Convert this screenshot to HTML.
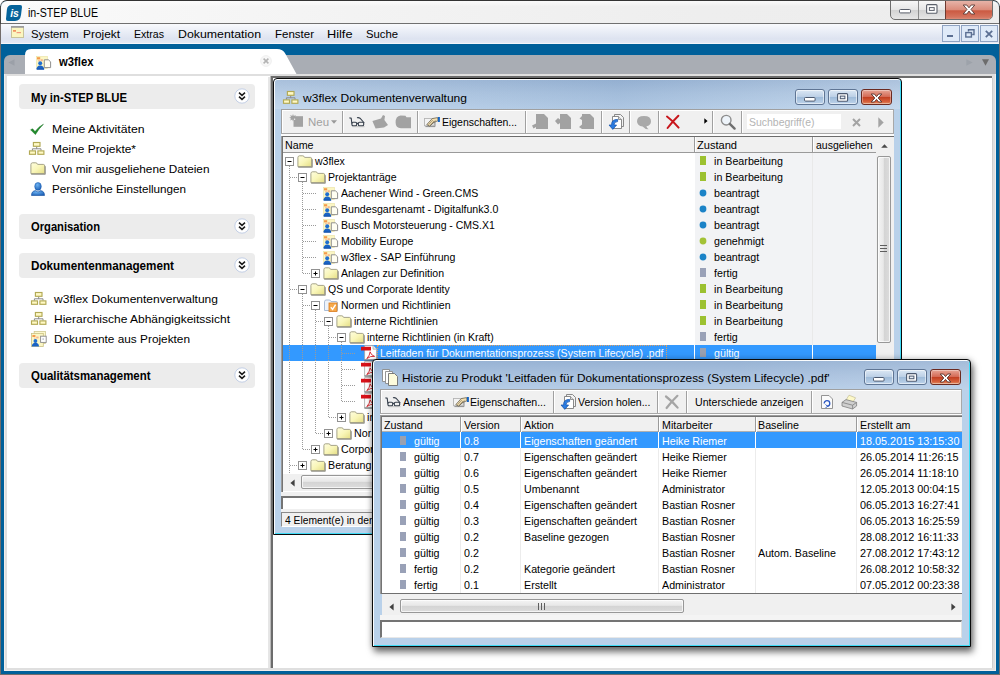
<!DOCTYPE html>
<html lang="de"><head><meta charset="utf-8"><title>in-STEP BLUE</title>
<style>
*{box-sizing:border-box;margin:0;padding:0}
html,body{width:1000px;height:675px;overflow:hidden;background:#fff}
body{position:relative;font-family:"Liberation Sans",sans-serif;font-size:11px;color:#000}
.a{position:absolute;display:block}
.t{position:absolute;line-height:1;white-space:nowrap;transform-origin:0 0;display:block}
svg{overflow:visible}
.sh{text-shadow:0 0 2px #5a1d10,0 1px 1px #6a2a1a}
</style></head><body>
<svg class="a" width="0" height="0" style="left:0;top:0"><defs><linearGradient id="fg" x1="0" y1="0" x2="1" y2="1"><stop offset="0" stop-color="#fefde0"/><stop offset="0.5" stop-color="#f9f6b8"/><stop offset="1" stop-color="#e4dd84"/></linearGradient><radialGradient id="ug" cx="0.4" cy="0.3" r="0.8"><stop offset="0" stop-color="#6db3f2"/><stop offset="1" stop-color="#1558b0"/></radialGradient></defs></svg>
<div class="a" style="left:0px;top:0px;width:1000px;height:675px;background:#00609a;border:1px solid #726d6b;border-top-color:#333;border-radius:7px 7px 0 0;"></div>
<div class="a" style="left:0px;top:6px;width:1px;height:18px;background:#444;"></div>
<div class="a" style="left:999px;top:6px;width:1px;height:18px;background:#444;"></div>
<div class="a" style="left:1px;top:1px;width:998px;height:22px;background:linear-gradient(rgba(255,255,255,.7),rgba(255,255,255,0) 25%),linear-gradient(90deg,#fafafa,#f3f3f3 35%,#eeeeee 70%,#ededed);border-radius:6px 6px 0 0;"></div>
<div class="a" style="left:1px;top:23px;width:998px;height:1px;background:#707070;"></div>
<div class="a" style="left:1px;top:24px;width:998px;height:20px;background:linear-gradient(#f9fafd,#e9edf6 40%,#dde3f0 75%,#e6eaf4);"></div>
<div class="a" style="left:1px;top:43px;width:998px;height:1px;background:#f4f6fa;"></div>
<svg class="a" style="left:6px;top:5px" width="16" height="16" viewBox="0 0 16 16"><path d="M0.9 4.5Q1.4 0.2 5.6 0H14.2Q16.2 0 16 2L15 10Q14.2 15.8 9 16H1.8Q-0.2 16 0 14Z" fill="#05639b"/><text x="4.2" y="11.6" font-family="Liberation Sans,sans-serif" font-size="10.5" font-weight="bold" font-style="italic" fill="#fff">is</text></svg>
<span class="t" style="left:27.8px;top:7px;font-size:12px;transform:scaleX(0.8844);">in-STEP BLUE</span>
<div class="a" style="left:890px;top:0;width:103px;height:20px;border:1px solid #6d6d6d;border-radius:0 0 5px 5px;overflow:hidden;background:linear-gradient(#f7f7f7,#e6e6e6 48%,#d3d3d3 52%,#e6e6e6)"><div class="a" style="left:27px;top:0;width:1px;height:19px;background:#8c8c8c"></div><div class="a" style="left:54px;top:0;width:48px;height:19px;border-left:1px solid #6d3a30;background:linear-gradient(#e6b3a8,#db8d7c 45%,#cb5a42 52%,#d4745e 85%,#e09a88)"></div></div>
<svg class="a" style="left:899px;top:9px" width="13" height="5" viewBox="0 0 13 5"><rect x="0.5" y="0.5" width="11" height="3.4" rx="1" fill="#fff" stroke="#5a5f6a" stroke-width="1"/></svg>
<svg class="a" style="left:926px;top:4px" width="12" height="10" viewBox="0 0 12 10"><rect x="0.6" y="0.6" width="10.4" height="8.6" rx="1" fill="#fdfdfd" stroke="#5a5f6a" stroke-width="1.1"/><rect x="3.4" y="3.6" width="4.8" height="2.8" fill="#fff" stroke="#5a5f6a" stroke-width="1"/></svg>
<svg class="a" style="left:962px;top:4px" width="14" height="11" viewBox="0 0 14 11"><path d="M1.2 1H4.8L7 3.8L9.2 1H12.8L9 5.4L12.8 10H9.2L7 7L4.8 10H1.2L5 5.4Z" fill="#fff" stroke="#5a3a34" stroke-width="0.9" stroke-linejoin="round"/></svg>
<svg class="a" style="left:11px;top:26px" width="13" height="12" viewBox="0 0 13 12"><rect x="0.5" y="0.5" width="12" height="11" fill="#fbf6c0" stroke="#c8c39a" stroke-width="1"/><rect x="0" y="0" width="13" height="1.8" fill="#9c9c9c"/><rect x="2" y="4.2" width="3" height="1.4" fill="#ee7a4a"/><rect x="5.6" y="6" width="4.4" height="1.2" fill="#f19a80"/></svg>
<span class="t" style="left:31.1px;top:29px;font-size:11.5px;transform:scaleX(0.9859);">System</span>
<span class="t" style="left:82.5px;top:29px;font-size:11.5px;transform:scaleX(1.0337);">Projekt</span>
<span class="t" style="left:133.5px;top:29px;font-size:11.5px;transform:scaleX(0.9205);">Extras</span>
<span class="t" style="left:177.5px;top:29px;font-size:11.5px;transform:scaleX(1.0730);">Dokumentation</span>
<span class="t" style="left:274.5px;top:29px;font-size:11.5px;transform:scaleX(1.0003);">Fenster</span>
<span class="t" style="left:326.5px;top:29px;font-size:11.5px;transform:scaleX(1.1084);">Hilfe</span>
<span class="t" style="left:365.5px;top:29px;font-size:11.5px;transform:scaleX(0.9813);">Suche</span>
<div class="a" style="left:942px;top:25px;width:18px;height:17px;background:#dfeaf8;border:1px solid #8fa3c2;"></div>
<div class="a" style="left:961px;top:25px;width:18px;height:17px;background:#dfeaf8;border:1px solid #8fa3c2;"></div>
<div class="a" style="left:980px;top:25px;width:18px;height:17px;background:#dfeaf8;border:1px solid #8fa3c2;"></div>
<div class="a" style="left:947px;top:35px;width:6px;height:2px;background:#5b6f92;"></div>
<svg class="a" style="left:965px;top:29px" width="10" height="9" viewBox="0 0 10 9"><path d="M3.5 2.5V0.8H9V5.5H7.2" fill="none" stroke="#5b6f92" stroke-width="1.4"/><rect x="0.8" y="3.6" width="5.6" height="4.4" fill="none" stroke="#5b6f92" stroke-width="1.4"/></svg>
<svg class="a" style="left:985px;top:29.5px" width="8" height="8" viewBox="0 0 8 8"><path d="M0.8 0.8L7.2 7.2M7.2 0.8L0.8 7.2" stroke="#5b6f92" stroke-width="1.8"/></svg>
<div class="a" style="left:4px;top:55px;width:992px;height:21px;background:#a9adb4;border-radius:6px 6px 0 0;"></div>
<svg class="a" style="left:25px;top:49px" width="274" height="26" viewBox="0 0 274 26"><path d="M0 25V6Q0 0 6 0H252Q258 0 260.5 5L271.5 25Z" fill="#fff"/></svg>
<svg class="a" style="left:8px;top:59px" width="7" height="7" viewBox="0 0 7 7"><path d="M6.5 0.3V6.7L0.3 3.5Z" fill="#9ba0a8"/></svg>
<svg class="a" style="left:36px;top:56px" width="15" height="14" viewBox="0 0 15 14"><rect x="0.5" y="0.5" width="11" height="12" fill="#fbf6c4" stroke="#e9e2a0" stroke-width="0.6"/><rect x="1" y="1.2" width="3.2" height="2.2" fill="#f59a4a"/><rect x="4.6" y="3.2" width="2.2" height="2" fill="#f7b58a"/><rect x="2" y="4" width="2" height="1.4" fill="#f9c7a0"/><circle cx="4.2" cy="7.3" r="2" fill="#1f6fd0"/><path d="M0.3 13.5Q0.5 9.6 4.2 9.4Q8 9.6 8.3 13.5Z" fill="#1a63c4"/><path d="M1 13.2H8" stroke="#0d4aa0" stroke-width="0.8"/><path d="M8.3 3.8H12.4L14.6 5.8V11.6H8.3Z" fill="#fffef2" stroke="#858585" stroke-width="0.9"/></svg>
<span class="t" style="left:58.5px;top:56px;font-size:12px;transform:scaleX(0.9404);font-weight:bold;">w3flex</span>
<svg class="a" style="left:260px;top:55px" width="12" height="12" viewBox="0 0 12 12"><circle cx="6" cy="6" r="5.4" fill="#f7f7f7" stroke="#ececec" stroke-width="0.8"/><path d="M3.6 3.6L8.4 8.4M8.4 3.6L3.6 8.4" stroke="#b3b3b3" stroke-width="1.5"/></svg>
<svg class="a" style="left:966px;top:59px" width="7" height="7" viewBox="0 0 7 7"><path d="M0.3 0.2V6.8L6.7 3.5Z" fill="#9da2aa"/></svg>
<svg class="a" style="left:981.5px;top:59px" width="7" height="7" viewBox="0 0 7 7"><path d="M0 0.2H7L3.5 6.8Z" fill="#6c6c6c"/></svg>
<div class="a" style="left:4px;top:74px;width:992px;height:597px;background:#fff;border:1px solid #f1eeec;"></div>
<div class="a" style="left:5px;top:74px;width:990px;height:596px;background:#fff;border:2px solid #dfdfdf;"></div>
<div class="a" style="left:19px;top:84px;width:236px;height:25px;background:#ececec;border-radius:4px;"></div>
<span class="t" style="left:31px;top:91px;font-size:13px;transform:scaleX(0.8705);font-weight:bold;">My in-STEP BLUE</span>
<svg class="a" style="left:234px;top:87.5px" width="16" height="16" viewBox="0 0 16 16"><circle cx="8" cy="8" r="7.2" fill="#fff" stroke="#c3cfe6" stroke-width="1"/><path d="M5 4.6L8 7.4L11 4.6M5 8.6L8 11.4L11 8.6" fill="none" stroke="#1a1a1a" stroke-width="1.5"/></svg>
<div class="a" style="left:19px;top:214px;width:236px;height:25px;background:#ececec;border-radius:4px;"></div>
<span class="t" style="left:31px;top:220px;font-size:13px;transform:scaleX(0.8606);font-weight:bold;">Organisation</span>
<svg class="a" style="left:234px;top:217.5px" width="16" height="16" viewBox="0 0 16 16"><circle cx="8" cy="8" r="7.2" fill="#fff" stroke="#c3cfe6" stroke-width="1"/><path d="M5 4.6L8 7.4L11 4.6M5 8.6L8 11.4L11 8.6" fill="none" stroke="#1a1a1a" stroke-width="1.5"/></svg>
<div class="a" style="left:19px;top:253px;width:236px;height:25px;background:#ececec;border-radius:4px;"></div>
<span class="t" style="left:31px;top:259px;font-size:13px;transform:scaleX(0.8998);font-weight:bold;">Dokumentenmanagement</span>
<svg class="a" style="left:234px;top:256.5px" width="16" height="16" viewBox="0 0 16 16"><circle cx="8" cy="8" r="7.2" fill="#fff" stroke="#c3cfe6" stroke-width="1"/><path d="M5 4.6L8 7.4L11 4.6M5 8.6L8 11.4L11 8.6" fill="none" stroke="#1a1a1a" stroke-width="1.5"/></svg>
<div class="a" style="left:19px;top:363px;width:236px;height:25px;background:#ececec;border-radius:4px;"></div>
<span class="t" style="left:31px;top:369px;font-size:13px;transform:scaleX(0.8799);font-weight:bold;">Qualitätsmanagement</span>
<svg class="a" style="left:234px;top:366.5px" width="16" height="16" viewBox="0 0 16 16"><circle cx="8" cy="8" r="7.2" fill="#fff" stroke="#c3cfe6" stroke-width="1"/><path d="M5 4.6L8 7.4L11 4.6M5 8.6L8 11.4L11 8.6" fill="none" stroke="#1a1a1a" stroke-width="1.5"/></svg>
<svg class="a" style="left:30px;top:123.5px" width="14" height="11" viewBox="0 0 14 11"><path d="M0.6 5.8L2.6 4.8L5 7.6Q8.6 2.6 13.4 0.2Q8.8 4.6 5.4 10.6Z" fill="#1f8a2a" stroke="#14701e" stroke-width="0.5"/></svg>
<span class="t" style="left:52px;top:124px;font-size:11.5px;transform:scaleX(1.0640);">Meine Aktivitäten</span>
<svg class="a" style="left:29px;top:142px" width="16" height="13" viewBox="0 0 16 13"><path d="M7.7 4.5V6.8M3.4 8.6V6.8H12V8.6" fill="none" stroke="#8a8a8a" stroke-width="1"/><rect x="4.4" y="0.5" width="6.6" height="3.8" fill="#fff9c4" stroke="#b2a955" stroke-width="1.15"/><rect x="0.5" y="8.9" width="6" height="3.4" fill="#fff9c4" stroke="#b2a955" stroke-width="1.15"/><rect x="8.9" y="8.9" width="6" height="3.4" fill="#fff9c4" stroke="#b2a955" stroke-width="1.15"/></svg>
<span class="t" style="left:52px;top:144px;font-size:11.5px;transform:scaleX(1.0347);">Meine Projekte*</span>
<svg class="a" style="left:29.5px;top:161.5px" width="16" height="13" viewBox="0 0 16 13"><path d="M0.9 11.6V2.6Q0.9 1 2.4 0.8H5.8Q7.2 0.9 7.6 2.4H13.4Q14.7 2.5 14.7 3.9V11.6Z" fill="url(#fg)" stroke="#9c9a7e" stroke-width="0.9"/><path d="M1.2 12.3H15.3V4.2" fill="none" stroke="#6f6d62" stroke-width="0.9" opacity="0.75"/></svg>
<span class="t" style="left:52px;top:164px;font-size:11.5px;transform:scaleX(1.0265);">Von mir ausgeliehene Dateien</span>
<svg class="a" style="left:30.5px;top:182px" width="14" height="14" viewBox="0 0 14 14"><path d="M0.5 13.5Q0.4 9.2 4.4 8.6L7 10L9.6 8.6Q13.6 9.2 13.5 13.5Z" fill="url(#ug)" stroke="#0f4c9c" stroke-width="0.6"/><ellipse cx="7" cy="4.4" rx="3.3" ry="3.9" fill="url(#ug)" stroke="#1558b0" stroke-width="0.5"/></svg>
<span class="t" style="left:52px;top:184px;font-size:11.5px;transform:scaleX(1.0126);">Persönliche Einstellungen</span>
<svg class="a" style="left:30.5px;top:292px" width="16" height="13" viewBox="0 0 16 13"><path d="M7.7 4.5V6.8M3.4 8.6V6.8H12V8.6" fill="none" stroke="#8a8a8a" stroke-width="1"/><rect x="4.4" y="0.5" width="6.6" height="3.8" fill="#fff9c4" stroke="#b2a955" stroke-width="1.15"/><rect x="0.5" y="8.9" width="6" height="3.4" fill="#fff9c4" stroke="#b2a955" stroke-width="1.15"/><rect x="8.9" y="8.9" width="6" height="3.4" fill="#fff9c4" stroke="#b2a955" stroke-width="1.15"/></svg>
<span class="t" style="left:53.5px;top:294px;font-size:11.5px;transform:scaleX(1.0472);">w3flex Dokumentenverwaltung</span>
<svg class="a" style="left:30.5px;top:312px" width="16" height="13" viewBox="0 0 16 13"><path d="M7.7 4.5V6.8M3.4 8.6V6.8H12V8.6" fill="none" stroke="#8a8a8a" stroke-width="1"/><rect x="4.4" y="0.5" width="6.6" height="3.8" fill="#fff9c4" stroke="#b2a955" stroke-width="1.15"/><rect x="0.5" y="8.9" width="6" height="3.4" fill="#fff9c4" stroke="#b2a955" stroke-width="1.15"/><rect x="8.9" y="8.9" width="6" height="3.4" fill="#fff9c4" stroke="#b2a955" stroke-width="1.15"/></svg>
<span class="t" style="left:53.5px;top:314px;font-size:11.5px;transform:scaleX(1.0429);">Hierarchische Abhängigkeitssicht</span>
<svg class="a" style="left:31px;top:331px" width="16" height="16" viewBox="0 0 16 16"><rect x="3.2" y="0.5" width="11.3" height="12" fill="#fbf7cc" stroke="#cfc890" stroke-width="0.8"/><rect x="0.5" y="2.5" width="11.8" height="13" fill="#fbf6c4" stroke="#c9c184" stroke-width="0.8"/><rect x="1.4" y="4" width="3" height="2" fill="#f59a4a"/><rect x="5.2" y="5.6" width="2.4" height="1.8" fill="#f7b58a"/><rect x="3" y="6.6" width="1.6" height="1.2" fill="#f9c7a0"/><circle cx="4.4" cy="10" r="1.9" fill="#1f6fd0"/><path d="M0.8 15.4Q1 11.8 4.4 11.8Q7.8 11.8 8 15.4Z" fill="#1a63c4"/><rect x="9.6" y="5.2" width="5.6" height="6.2" fill="#fdfdfd" stroke="#8a8a8a" stroke-width="0.9"/><rect x="11.4" y="7.2" width="1.6" height="1.8" fill="#c8ccd6"/></svg>
<span class="t" style="left:53.5px;top:334px;font-size:11.5px;transform:scaleX(1.0278);">Dokumente aus Projekten</span>
<div class="a" style="left:268px;top:77px;width:2px;height:591px;background:#e6e6e6;"></div>
<div class="a" style="left:270px;top:76px;width:1px;height:592px;background:#b9b9b9;"></div>
<div class="a" style="left:271px;top:76px;width:2px;height:592px;background:#6c6c6c;"></div>
<div class="a" style="left:271px;top:76px;width:721px;height:2px;background:#6c6c6c;"></div>
<div class="a" style="left:992px;top:76px;width:2px;height:593px;background:#e0e0e0;"></div>
<div class="a" style="left:992px;top:78px;width:1px;height:590px;background:#cfcfcf;"></div>
<div class="a" style="left:273px;top:78.4px;width:629px;height:456.6px;background:#b9d1ea;border:1px solid #0a0a0a;border-radius:4px 4px 0 0;box-shadow:inset 1px 1px 0 rgba(255,255,255,.92),inset -1px -1px 0 #3fdcf7;"></div>
<div class="a" style="left:275px;top:80.4px;width:625px;height:29px;background:linear-gradient(90deg,rgba(255,255,255,.15),rgba(120,150,190,.18) 55%,rgba(255,255,255,.18)),linear-gradient(#9ab5d5,#abc4e0 45%,#b9d1ea);border-radius:3px 3px 0 0;"></div>
<svg class="a" style="left:283px;top:91px" width="16" height="13" viewBox="0 0 16 13"><path d="M7.7 4.5V6.8M3.4 8.6V6.8H12V8.6" fill="none" stroke="#8a8a8a" stroke-width="1"/><rect x="4.4" y="0.5" width="6.6" height="3.8" fill="#fff9c4" stroke="#b2a955" stroke-width="1.15"/><rect x="0.5" y="8.9" width="6" height="3.4" fill="#fff9c4" stroke="#b2a955" stroke-width="1.15"/><rect x="8.9" y="8.9" width="6" height="3.4" fill="#fff9c4" stroke="#b2a955" stroke-width="1.15"/></svg>
<span class="t" style="left:303px;top:93px;font-size:11.5px;transform:scaleX(1.0472);">w3flex Dokumentenverwaltung</span>
<div class="a" style="left:795px;top:89px;width:30px;height:16px;border:1px solid #5f7594;border-radius:3px;background:linear-gradient(#dbe7f4,#bcd0e6 48%,#9fbbd9 52%,#bdd3ea);box-shadow:inset 0 0 0 1px rgba(255,255,255,.55)"></div>
<div class="a" style="left:828px;top:89px;width:30px;height:16px;border:1px solid #5f7594;border-radius:3px;background:linear-gradient(#dbe7f4,#bcd0e6 48%,#9fbbd9 52%,#bdd3ea);box-shadow:inset 0 0 0 1px rgba(255,255,255,.55)"></div>
<div class="a" style="left:861px;top:89px;width:31px;height:16px;border:1px solid #6b2a20;border-radius:3px;background:linear-gradient(#e7a595,#d46a55 48%,#c23f22 52%,#d8623c 85%,#e29a70);box-shadow:inset 0 0 0 1px rgba(255,255,255,.35)"></div>
<svg class="a" style="left:804px;top:97px" width="12" height="5" viewBox="0 0 12 5"><rect x="0.5" y="0.5" width="10.6" height="3.6" rx="1" fill="#fff" stroke="#4d5a70" stroke-width="1"/></svg>
<svg class="a" style="left:837px;top:93px" width="12" height="9" viewBox="0 0 12 9"><rect x="0.6" y="0.6" width="10" height="7.6" rx="1" fill="#fdfdfd" stroke="#4d5a70" stroke-width="1.1"/><rect x="3.3" y="3.1" width="4.6" height="2.6" fill="#e8eef6" stroke="#4d5a70" stroke-width="1"/></svg>
<svg class="a" style="left:870px;top:92.5px" width="13" height="10" viewBox="0 0 13 10"><path d="M1.2 1H4.4L6.5 3.6L8.6 1H11.8L8.2 5L11.8 9H8.6L6.5 6.4L4.4 9H1.2L4.8 5Z" fill="#fff" stroke="#54302a" stroke-width="0.9" stroke-linejoin="round"/></svg>
<div class="a" style="left:281px;top:109px;width:612.6px;height:1px;background:#a0a0a0;"></div>
<div class="a" style="left:281px;top:110px;width:612.6px;height:1px;background:#fff;"></div>
<div class="a" style="left:281px;top:111px;width:612.6px;height:22px;background:#f0f0f0;"></div>
<div class="a" style="left:281px;top:133px;width:612.6px;height:1px;background:#a8a8a8;"></div>
<div class="a" style="left:281px;top:134px;width:612.6px;height:1.5px;background:#fcfcfc;"></div>
<div class="a" style="left:281px;top:109px;width:1px;height:24px;background:#a0a0a0;"></div>
<div class="a" style="left:282px;top:110px;width:1px;height:23px;background:#fff;"></div>
<div class="a" style="left:892.6px;top:109px;width:1px;height:25px;background:#a8a8a8;"></div>
<svg class="a" style="left:290px;top:114px" width="14" height="13" viewBox="0 0 14 13"><path d="M3.5 2.2H13V12.8H3.5Z" fill="#a2a2a2"/><path d="M3 0L3.8 2L5.8 1L5 3L7 3.8L5 4.6L5.8 6.6L3.8 5.6L3 7.6L2.2 5.6L0.2 6.6L1 4.6L-0.8 3.8L1 3L0.2 1L2.2 2Z" fill="#a2a2a2"/><rect x="4" y="4.6" width="1.2" height="1.2" fill="#f0f0f0"/></svg>
<span class="t" style="left:307.7px;top:117px;font-size:11px;transform:scaleX(1.0406);color:#a0a0a0;">Neu</span>
<svg class="a" style="left:331px;top:120px" width="6" height="4" viewBox="0 0 6 4"><path d="M0 0.3H6L3 3.8Z" fill="#9a9a9a"/></svg>
<div class="a" style="left:342px;top:111px;width:1px;height:22px;background:#a0a0a0;"></div>
<div class="a" style="left:343px;top:111px;width:1px;height:22px;background:#fff;"></div>
<svg class="a" style="left:349px;top:117.3px" width="16" height="10" viewBox="0 0 16 10"><path d="M0.4 0.9L2.2 1.2L2.9 6.6" fill="none" stroke="#38414d" stroke-width="1.1"/><rect x="2.9" y="5.2" width="4.8" height="3.7" rx="1.3" fill="none" stroke="#38414d" stroke-width="1.1"/><rect x="9.3" y="5.2" width="5.4" height="3.7" rx="1.3" fill="none" stroke="#38414d" stroke-width="1.1"/><path d="M7.7 6.4H9.3M8 0.8Q9.6 0.2 11 1.2L15.3 6" fill="none" stroke="#38414d" stroke-width="1.1"/><path d="M3.5 9.7H15.5" stroke="#bdbdbd" stroke-width="0.9"/></svg>
<svg class="a" style="left:371px;top:114px" width="17" height="15" viewBox="0 0 17 15"><path d="M1.4 7L10 4.4L12 1L14 2L13.4 6L17 11L13 13.6L4.6 14.4Z" fill="#a2a2a2"/></svg>
<svg class="a" style="left:395px;top:114.5px" width="16" height="14" viewBox="0 0 16 14"><path d="M0.6 7.5Q0.6 1 5.5 0.5L10.5 0.8L11.5 2.2H16V13.2H6Q0.6 13 0.6 7.5Z" fill="#a2a2a2"/></svg>
<div class="a" style="left:417px;top:111px;width:1px;height:22px;background:#a0a0a0;"></div>
<div class="a" style="left:418px;top:111px;width:1px;height:22px;background:#fff;"></div>
<svg class="a" style="left:424px;top:117px" width="16" height="11" viewBox="0 0 16 11"><rect x="0.5" y="1.5" width="9.6" height="7.2" fill="#f3f3f3" stroke="#b4b4b4" stroke-width="0.9"/><path d="M1.4 9.6H11V3.4" fill="none" stroke="#8f8f8f" stroke-width="1"/><path d="M2.8 7.6L8.2 1.6L13.6 0.6L14.2 3.6L9.4 5.6L5.8 9.2Z" fill="#f3dfb2" stroke="#57503f" stroke-width="0.7" stroke-linejoin="round"/><path d="M4.4 7.8L8.8 3M6 8.4L10.2 3.8M7.4 8L11.6 3.4" stroke="#6a6048" stroke-width="0.5"/><rect x="13.9" y="0" width="2" height="5" fill="#1463c2"/></svg>
<span class="t" style="left:442.2px;top:117px;font-size:11px;transform:scaleX(0.9507);">Eigenschaften...</span>
<div class="a" style="left:525px;top:111px;width:1px;height:22px;background:#a0a0a0;"></div>
<div class="a" style="left:526px;top:111px;width:1px;height:22px;background:#fff;"></div>
<svg class="a" style="left:532px;top:114px" width="16" height="15" viewBox="0 0 16 15"><path d="M4 0H12L16 4V15H4V13L1.5 14.5L0 11.5L4 9.5Z" fill="#a2a2a2"/></svg>
<svg class="a" style="left:555px;top:114px" width="16" height="15" viewBox="0 0 16 15"><path d="M5 0H12L16 4V15H5V9L3 10.5L0 7L3 4L5 5.5Z" fill="#a2a2a2"/></svg>
<svg class="a" style="left:578px;top:114px" width="16" height="15" viewBox="0 0 16 15"><path d="M4 0H12L16 4V15H4L1 13L4 10.5V6L1.5 4.5L4 2Z" fill="#a2a2a2"/></svg>
<div class="a" style="left:601px;top:111px;width:1px;height:22px;background:#a0a0a0;"></div>
<div class="a" style="left:602px;top:111px;width:1px;height:22px;background:#fff;"></div>
<svg class="a" style="left:607.5px;top:113px" width="16" height="17" viewBox="0 0 16 17"><path d="M6.5 1.5H12.5L15.5 4.5V13.5H6.5Z" fill="#f2f2f2" stroke="#7d7d7d" stroke-width="0.9"/><path d="M4.5 3.5H10.5L13.5 6.5V15.5H4.5Z" fill="#fff" stroke="#7d7d7d" stroke-width="0.9"/><path d="M10.5 3.5V6.5H13.5" fill="#dedede" stroke="#7d7d7d" stroke-width="0.8"/><path d="M9.6 6.4Q3.6 6.4 3.6 11.2V12H1L4.8 16.4L8.6 12H6.2V11.2Q6.4 8.8 9.6 8.6Z" fill="#2a7be0" stroke="#114fa8" stroke-width="0.7"/></svg>
<div class="a" style="left:629px;top:111px;width:1px;height:22px;background:#a0a0a0;"></div>
<div class="a" style="left:630px;top:111px;width:1px;height:22px;background:#fff;"></div>
<svg class="a" style="left:636px;top:114.5px" width="16" height="15" viewBox="0 0 16 15"><path d="M8 1Q15 1 15 6.2Q15 10.4 10.4 11.2Q11 13.4 12.6 14.2Q8.6 14 6.6 11.4Q1 10.8 1 6.2Q1 1 8 1Z" fill="#a9a9a9"/></svg>
<div class="a" style="left:658px;top:111px;width:1px;height:22px;background:#a0a0a0;"></div>
<div class="a" style="left:659px;top:111px;width:1px;height:22px;background:#fff;"></div>
<svg class="a" style="left:665.5px;top:115px" width="14" height="14" viewBox="0 0 14 14"><path d="M1 1.5Q7 6 12.6 12.6M12.4 0.8Q7 6 1.6 13" fill="none" stroke="#c8161c" stroke-width="2" stroke-linecap="round"/></svg>
<svg class="a" style="left:704px;top:118.4px" width="4" height="6" viewBox="0 0 4 6"><path d="M0.3 0.2V5.8L3.6 3Z" fill="#000"/></svg>
<div class="a" style="left:712px;top:111px;width:1px;height:22px;background:#a0a0a0;"></div>
<div class="a" style="left:713px;top:111px;width:1px;height:22px;background:#fff;"></div>
<svg class="a" style="left:720px;top:114px" width="16" height="16" viewBox="0 0 16 16"><circle cx="6.2" cy="6.2" r="4.8" fill="#eef4fa" stroke="#8d8d8d" stroke-width="1.4"/><path d="M9.8 9.8L14.6 14.6" stroke="#6f6f6f" stroke-width="2.4" stroke-linecap="round"/></svg>
<div class="a" style="left:741px;top:111px;width:1px;height:22px;background:#a0a0a0;"></div>
<div class="a" style="left:742px;top:111px;width:1px;height:22px;background:#fff;"></div>
<div class="a" style="left:746.5px;top:114px;width:94px;height:15px;background:#fff;"></div>
<span class="t" style="left:749.2px;top:117px;font-size:11px;transform:scaleX(0.9508);color:#b4b4b4;">Suchbegriff(e)</span>
<svg class="a" style="left:852px;top:117.5px" width="9" height="9" viewBox="0 0 9 9"><path d="M1 1L8 8M8 1L1 8" stroke="#a3a3a3" stroke-width="2"/></svg>
<svg class="a" style="left:878px;top:116.5px" width="6" height="11" viewBox="0 0 6 11"><path d="M0.3 0.3V10.7L5.7 5.5Z" fill="#a3a3a3"/></svg>
<div class="a" style="left:281px;top:135.5px;width:613px;height:356.5px;background:#fff;border-top:1.5px solid #6c6c6c;border-left:2px solid #747474;"></div>
<div class="a" style="left:281px;top:135.5px;width:1px;height:356.5px;background:#9a9a9a;"></div>
<div class="a" style="left:695px;top:153px;width:181px;height:321px;background:#f2f3f5;"></div>
<div class="a" style="left:812px;top:153px;width:1px;height:321px;background:#e9e9e9;"></div>
<div class="a" style="left:283px;top:137px;width:593px;height:15px;background:#f0f0f0;"></div>
<div class="a" style="left:283px;top:152px;width:593px;height:1px;background:#9a9a9a;"></div>
<span class="t" style="left:285.2px;top:140px;font-size:11px;transform:scaleX(0.9713);">Name</span>
<div class="a" style="left:694px;top:137px;width:1px;height:15px;background:#9a9a9a;"></div>
<div class="a" style="left:695px;top:137px;width:1px;height:15px;background:#fff;"></div>
<span class="t" style="left:696.7px;top:140px;font-size:11px;transform:scaleX(1.0064);">Zustand</span>
<div class="a" style="left:812px;top:137px;width:1px;height:15px;background:#9a9a9a;"></div>
<div class="a" style="left:813px;top:137px;width:1px;height:15px;background:#fff;"></div>
<span class="t" style="left:816.2px;top:140px;font-size:11px;transform:scaleX(0.9523);">ausgeliehen</span>
<div class="a" style="left:876px;top:137px;width:18px;height:338px;background:#f0f0f0;"></div>
<svg class="a" style="left:881px;top:144.2px" width="7" height="4" viewBox="0 0 7 4"><path d="M0.2 3.8H6.8L3.5 0.3Z" fill="#4a4a4a"/></svg>
<div class="a" style="left:877px;top:155.5px;width:13.6px;height:187px;border:1px solid #979797;border-radius:2px;background:linear-gradient(90deg,#f4f4f4,#e8e8e8 45%,#d4d4d4 50%,#dcdcdc);box-shadow:inset 0 0 0 1px rgba(255,255,255,.7)"></div>
<svg class="a" style="left:880.3px;top:244.5px" width="7" height="8" viewBox="0 0 7 8"><path d="M0 0.5H7M0 3.5H7M0 6.5H7" stroke="#5e5e5e" stroke-width="1"/></svg>
<div class="a" style="left:283px;top:345.2px;width:593px;height:16px;background:#3399ff;"></div>
<div class="a" style="left:289px;top:166.2px;width:1px;height:309.0px;background:repeating-linear-gradient(#9a9a9a 0 1px,transparent 1px 2px)"></div>
<div class="a" style="left:302px;top:182.2px;width:1px;height:91.0px;background:repeating-linear-gradient(#9a9a9a 0 1px,transparent 1px 2px)"></div>
<div class="a" style="left:302px;top:294.2px;width:1px;height:155.0px;background:repeating-linear-gradient(#9a9a9a 0 1px,transparent 1px 2px)"></div>
<div class="a" style="left:315px;top:310.2px;width:1px;height:123.0px;background:repeating-linear-gradient(#9a9a9a 0 1px,transparent 1px 2px)"></div>
<div class="a" style="left:328px;top:326.2px;width:1px;height:91.0px;background:repeating-linear-gradient(#9a9a9a 0 1px,transparent 1px 2px)"></div>
<div class="a" style="left:341px;top:342.2px;width:1px;height:59.0px;background:repeating-linear-gradient(#9a9a9a 0 1px,transparent 1px 2px)"></div>
<svg class="a" style="left:285px;top:157.2px" width="9" height="9" viewBox="0 0 9 9"><rect x="0.5" y="0.5" width="8" height="8" fill="#fff" stroke="#919191" stroke-width="1"/><path d="M2.5 4.5H6.5" stroke="#000" stroke-width="1"/></svg>
<svg class="a" style="left:296.5px;top:154.7px" width="16" height="13" viewBox="0 0 16 13"><path d="M0.9 11.6V2.6Q0.9 1 2.4 0.8H5.8Q7.2 0.9 7.6 2.4H13.4Q14.7 2.5 14.7 3.9V11.6Z" fill="url(#fg)" stroke="#9c9a7e" stroke-width="0.9"/><path d="M1.2 12.3H15.3V4.2" fill="none" stroke="#6f6d62" stroke-width="0.9" opacity="0.75"/></svg>
<span class="t" style="left:314.7px;top:156px;font-size:11px;transform:scaleX(0.9557);">w3flex</span>
<div class="a" style="left:700px;top:156.2px;width:6px;height:9px;background:#9cc130;"></div>
<span class="t" style="left:713.7px;top:156px;font-size:11px;transform:scaleX(0.9720);">in Bearbeitung</span>
<div class="a" style="left:290px;top:177.2px;width:8px;height:1px;background:repeating-linear-gradient(90deg,#9a9a9a 0 1px,transparent 1px 2px)"></div>
<svg class="a" style="left:298px;top:173.2px" width="9" height="9" viewBox="0 0 9 9"><rect x="0.5" y="0.5" width="8" height="8" fill="#fff" stroke="#919191" stroke-width="1"/><path d="M2.5 4.5H6.5" stroke="#000" stroke-width="1"/></svg>
<svg class="a" style="left:309.5px;top:170.7px" width="16" height="13" viewBox="0 0 16 13"><path d="M0.9 11.6V2.6Q0.9 1 2.4 0.8H5.8Q7.2 0.9 7.6 2.4H13.4Q14.7 2.5 14.7 3.9V11.6Z" fill="url(#fg)" stroke="#9c9a7e" stroke-width="0.9"/><path d="M1.2 12.3H15.3V4.2" fill="none" stroke="#6f6d62" stroke-width="0.9" opacity="0.75"/></svg>
<span class="t" style="left:327.7px;top:172px;font-size:11px;transform:scaleX(0.9588);">Projektanträge</span>
<div class="a" style="left:700px;top:172.2px;width:6px;height:9px;background:#9cc130;"></div>
<span class="t" style="left:713.7px;top:172px;font-size:11px;transform:scaleX(0.9720);">in Bearbeitung</span>
<div class="a" style="left:303px;top:193.2px;width:13px;height:1px;background:repeating-linear-gradient(90deg,#9a9a9a 0 1px,transparent 1px 2px)"></div>
<svg class="a" style="left:323px;top:186.7px" width="15" height="14" viewBox="0 0 15 14"><rect x="0.5" y="0.5" width="11" height="12" fill="#fbf6c4" stroke="#e9e2a0" stroke-width="0.6"/><rect x="1" y="1.2" width="3.2" height="2.2" fill="#f59a4a"/><rect x="4.6" y="3.2" width="2.2" height="2" fill="#f7b58a"/><rect x="2" y="4" width="2" height="1.4" fill="#f9c7a0"/><circle cx="4.2" cy="7.3" r="2" fill="#1f6fd0"/><path d="M0.3 13.5Q0.5 9.6 4.2 9.4Q8 9.6 8.3 13.5Z" fill="#1a63c4"/><path d="M1 13.2H8" stroke="#0d4aa0" stroke-width="0.8"/><path d="M8.3 3.8H12.4L14.6 5.8V11.6H8.3Z" fill="#fffef2" stroke="#858585" stroke-width="0.9"/></svg>
<span class="t" style="left:340.7px;top:188px;font-size:11px;transform:scaleX(0.9591);">Aachener Wind - Green.CMS</span>
<svg class="a" style="left:699px;top:189.2px" width="8" height="8" viewBox="0 0 8 8"><circle cx="4" cy="4" r="3.4" fill="#1b83c7"/></svg>
<span class="t" style="left:713.7px;top:188px;font-size:11px;transform:scaleX(0.9720);">beantragt</span>
<div class="a" style="left:303px;top:209.2px;width:13px;height:1px;background:repeating-linear-gradient(90deg,#9a9a9a 0 1px,transparent 1px 2px)"></div>
<svg class="a" style="left:323px;top:202.7px" width="15" height="14" viewBox="0 0 15 14"><rect x="0.5" y="0.5" width="11" height="12" fill="#fbf6c4" stroke="#e9e2a0" stroke-width="0.6"/><rect x="1" y="1.2" width="3.2" height="2.2" fill="#f59a4a"/><rect x="4.6" y="3.2" width="2.2" height="2" fill="#f7b58a"/><rect x="2" y="4" width="2" height="1.4" fill="#f9c7a0"/><circle cx="4.2" cy="7.3" r="2" fill="#1f6fd0"/><path d="M0.3 13.5Q0.5 9.6 4.2 9.4Q8 9.6 8.3 13.5Z" fill="#1a63c4"/><path d="M1 13.2H8" stroke="#0d4aa0" stroke-width="0.8"/><path d="M8.3 3.8H12.4L14.6 5.8V11.6H8.3Z" fill="#fffef2" stroke="#858585" stroke-width="0.9"/></svg>
<span class="t" style="left:340.7px;top:204px;font-size:11px;transform:scaleX(0.9635);">Bundesgartenamt - Digitalfunk3.0</span>
<svg class="a" style="left:699px;top:205.2px" width="8" height="8" viewBox="0 0 8 8"><circle cx="4" cy="4" r="3.4" fill="#1b83c7"/></svg>
<span class="t" style="left:713.7px;top:204px;font-size:11px;transform:scaleX(0.9720);">beantragt</span>
<div class="a" style="left:303px;top:225.2px;width:13px;height:1px;background:repeating-linear-gradient(90deg,#9a9a9a 0 1px,transparent 1px 2px)"></div>
<svg class="a" style="left:323px;top:218.7px" width="15" height="14" viewBox="0 0 15 14"><rect x="0.5" y="0.5" width="11" height="12" fill="#fbf6c4" stroke="#e9e2a0" stroke-width="0.6"/><rect x="1" y="1.2" width="3.2" height="2.2" fill="#f59a4a"/><rect x="4.6" y="3.2" width="2.2" height="2" fill="#f7b58a"/><rect x="2" y="4" width="2" height="1.4" fill="#f9c7a0"/><circle cx="4.2" cy="7.3" r="2" fill="#1f6fd0"/><path d="M0.3 13.5Q0.5 9.6 4.2 9.4Q8 9.6 8.3 13.5Z" fill="#1a63c4"/><path d="M1 13.2H8" stroke="#0d4aa0" stroke-width="0.8"/><path d="M8.3 3.8H12.4L14.6 5.8V11.6H8.3Z" fill="#fffef2" stroke="#858585" stroke-width="0.9"/></svg>
<span class="t" style="left:340.7px;top:220px;font-size:11px;transform:scaleX(0.9529);">Busch Motorsteuerung - CMS.X1</span>
<svg class="a" style="left:699px;top:221.2px" width="8" height="8" viewBox="0 0 8 8"><circle cx="4" cy="4" r="3.4" fill="#1b83c7"/></svg>
<span class="t" style="left:713.7px;top:220px;font-size:11px;transform:scaleX(0.9720);">beantragt</span>
<div class="a" style="left:303px;top:241.2px;width:13px;height:1px;background:repeating-linear-gradient(90deg,#9a9a9a 0 1px,transparent 1px 2px)"></div>
<svg class="a" style="left:323px;top:234.7px" width="15" height="14" viewBox="0 0 15 14"><rect x="0.5" y="0.5" width="11" height="12" fill="#fbf6c4" stroke="#e9e2a0" stroke-width="0.6"/><rect x="1" y="1.2" width="3.2" height="2.2" fill="#f59a4a"/><rect x="4.6" y="3.2" width="2.2" height="2" fill="#f7b58a"/><rect x="2" y="4" width="2" height="1.4" fill="#f9c7a0"/><circle cx="4.2" cy="7.3" r="2" fill="#1f6fd0"/><path d="M0.3 13.5Q0.5 9.6 4.2 9.4Q8 9.6 8.3 13.5Z" fill="#1a63c4"/><path d="M1 13.2H8" stroke="#0d4aa0" stroke-width="0.8"/><path d="M8.3 3.8H12.4L14.6 5.8V11.6H8.3Z" fill="#fffef2" stroke="#858585" stroke-width="0.9"/></svg>
<span class="t" style="left:340.7px;top:236px;font-size:11px;transform:scaleX(0.9536);">Mobility Europe</span>
<svg class="a" style="left:699px;top:237.2px" width="8" height="8" viewBox="0 0 8 8"><circle cx="4" cy="4" r="3.4" fill="#a3c236"/></svg>
<span class="t" style="left:713.7px;top:236px;font-size:11px;transform:scaleX(0.9720);">genehmigt</span>
<div class="a" style="left:303px;top:257.2px;width:13px;height:1px;background:repeating-linear-gradient(90deg,#9a9a9a 0 1px,transparent 1px 2px)"></div>
<svg class="a" style="left:323px;top:250.7px" width="15" height="14" viewBox="0 0 15 14"><rect x="0.5" y="0.5" width="11" height="12" fill="#fbf6c4" stroke="#e9e2a0" stroke-width="0.6"/><rect x="1" y="1.2" width="3.2" height="2.2" fill="#f59a4a"/><rect x="4.6" y="3.2" width="2.2" height="2" fill="#f7b58a"/><rect x="2" y="4" width="2" height="1.4" fill="#f9c7a0"/><circle cx="4.2" cy="7.3" r="2" fill="#1f6fd0"/><path d="M0.3 13.5Q0.5 9.6 4.2 9.4Q8 9.6 8.3 13.5Z" fill="#1a63c4"/><path d="M1 13.2H8" stroke="#0d4aa0" stroke-width="0.8"/><path d="M8.3 3.8H12.4L14.6 5.8V11.6H8.3Z" fill="#fffef2" stroke="#858585" stroke-width="0.9"/></svg>
<span class="t" style="left:340.7px;top:252px;font-size:11px;transform:scaleX(0.9602);">w3flex - SAP Einführung</span>
<svg class="a" style="left:699px;top:253.2px" width="8" height="8" viewBox="0 0 8 8"><circle cx="4" cy="4" r="3.4" fill="#1b83c7"/></svg>
<span class="t" style="left:713.7px;top:252px;font-size:11px;transform:scaleX(0.9720);">beantragt</span>
<div class="a" style="left:303px;top:273.2px;width:8px;height:1px;background:repeating-linear-gradient(90deg,#9a9a9a 0 1px,transparent 1px 2px)"></div>
<svg class="a" style="left:311px;top:269.2px" width="9" height="9" viewBox="0 0 9 9"><rect x="0.5" y="0.5" width="8" height="8" fill="#fff" stroke="#919191" stroke-width="1"/><path d="M2.5 4.5H6.5M4.5 2.5V6.5" stroke="#000" stroke-width="1"/></svg>
<svg class="a" style="left:322.5px;top:266.7px" width="16" height="13" viewBox="0 0 16 13"><path d="M0.9 11.6V2.6Q0.9 1 2.4 0.8H5.8Q7.2 0.9 7.6 2.4H13.4Q14.7 2.5 14.7 3.9V11.6Z" fill="url(#fg)" stroke="#9c9a7e" stroke-width="0.9"/><path d="M1.2 12.3H15.3V4.2" fill="none" stroke="#6f6d62" stroke-width="0.9" opacity="0.75"/></svg>
<span class="t" style="left:340.7px;top:268px;font-size:11px;transform:scaleX(0.9570);">Anlagen zur Definition</span>
<div class="a" style="left:700px;top:268.2px;width:6px;height:9px;background:#99a1b7;"></div>
<span class="t" style="left:713.7px;top:268px;font-size:11px;transform:scaleX(0.9720);">fertig</span>
<div class="a" style="left:290px;top:289.2px;width:8px;height:1px;background:repeating-linear-gradient(90deg,#9a9a9a 0 1px,transparent 1px 2px)"></div>
<svg class="a" style="left:298px;top:285.2px" width="9" height="9" viewBox="0 0 9 9"><rect x="0.5" y="0.5" width="8" height="8" fill="#fff" stroke="#919191" stroke-width="1"/><path d="M2.5 4.5H6.5" stroke="#000" stroke-width="1"/></svg>
<svg class="a" style="left:309.5px;top:282.7px" width="16" height="13" viewBox="0 0 16 13"><path d="M0.9 11.6V2.6Q0.9 1 2.4 0.8H5.8Q7.2 0.9 7.6 2.4H13.4Q14.7 2.5 14.7 3.9V11.6Z" fill="url(#fg)" stroke="#9c9a7e" stroke-width="0.9"/><path d="M1.2 12.3H15.3V4.2" fill="none" stroke="#6f6d62" stroke-width="0.9" opacity="0.75"/></svg>
<span class="t" style="left:327.7px;top:284px;font-size:11px;transform:scaleX(0.9523);">QS und Corporate Identity</span>
<div class="a" style="left:700px;top:284.2px;width:6px;height:9px;background:#9cc130;"></div>
<span class="t" style="left:713.7px;top:284px;font-size:11px;transform:scaleX(0.9720);">in Bearbeitung</span>
<div class="a" style="left:303px;top:305.2px;width:8px;height:1px;background:repeating-linear-gradient(90deg,#9a9a9a 0 1px,transparent 1px 2px)"></div>
<svg class="a" style="left:311px;top:301.2px" width="9" height="9" viewBox="0 0 9 9"><rect x="0.5" y="0.5" width="8" height="8" fill="#fff" stroke="#919191" stroke-width="1"/><path d="M2.5 4.5H6.5" stroke="#000" stroke-width="1"/></svg>
<svg class="a" style="left:322.5px;top:298.7px" width="16" height="13" viewBox="0 0 16 13"><path d="M1.5 11.5V2.8Q1.5 1.2 3 1H6.2Q7.6 1.1 8 2.5H13.2Q14.5 2.6 14.5 4V11.5Z" fill="#eef3fa" stroke="#a9bcd6" stroke-width="1"/><rect x="6" y="4" width="8" height="8.5" fill="#f7a94a" stroke="#d87a1c" stroke-width="0.8"/><path d="M7.8 8.2L9.6 10.4L12.6 5.6" fill="none" stroke="#fff" stroke-width="1.4"/></svg>
<span class="t" style="left:340.7px;top:300px;font-size:11px;transform:scaleX(0.9577);">Normen und Richtlinien</span>
<div class="a" style="left:700px;top:300.2px;width:6px;height:9px;background:#9cc130;"></div>
<span class="t" style="left:713.7px;top:300px;font-size:11px;transform:scaleX(0.9720);">in Bearbeitung</span>
<div class="a" style="left:316px;top:321.2px;width:8px;height:1px;background:repeating-linear-gradient(90deg,#9a9a9a 0 1px,transparent 1px 2px)"></div>
<svg class="a" style="left:324px;top:317.2px" width="9" height="9" viewBox="0 0 9 9"><rect x="0.5" y="0.5" width="8" height="8" fill="#fff" stroke="#919191" stroke-width="1"/><path d="M2.5 4.5H6.5" stroke="#000" stroke-width="1"/></svg>
<svg class="a" style="left:335.5px;top:314.7px" width="16" height="13" viewBox="0 0 16 13"><path d="M0.9 11.6V2.6Q0.9 1 2.4 0.8H5.8Q7.2 0.9 7.6 2.4H13.4Q14.7 2.5 14.7 3.9V11.6Z" fill="url(#fg)" stroke="#9c9a7e" stroke-width="0.9"/><path d="M1.2 12.3H15.3V4.2" fill="none" stroke="#6f6d62" stroke-width="0.9" opacity="0.75"/></svg>
<span class="t" style="left:353.7px;top:316px;font-size:11px;transform:scaleX(0.9607);">interne Richtlinien</span>
<div class="a" style="left:700px;top:316.2px;width:6px;height:9px;background:#9cc130;"></div>
<span class="t" style="left:713.7px;top:316px;font-size:11px;transform:scaleX(0.9720);">in Bearbeitung</span>
<div class="a" style="left:329px;top:337.2px;width:8px;height:1px;background:repeating-linear-gradient(90deg,#9a9a9a 0 1px,transparent 1px 2px)"></div>
<svg class="a" style="left:337px;top:333.2px" width="9" height="9" viewBox="0 0 9 9"><rect x="0.5" y="0.5" width="8" height="8" fill="#fff" stroke="#919191" stroke-width="1"/><path d="M2.5 4.5H6.5" stroke="#000" stroke-width="1"/></svg>
<svg class="a" style="left:348.5px;top:330.7px" width="16" height="13" viewBox="0 0 16 13"><path d="M0.9 11.6V2.6Q0.9 1 2.4 0.8H5.8Q7.2 0.9 7.6 2.4H13.4Q14.7 2.5 14.7 3.9V11.6Z" fill="url(#fg)" stroke="#9c9a7e" stroke-width="0.9"/><path d="M1.2 12.3H15.3V4.2" fill="none" stroke="#6f6d62" stroke-width="0.9" opacity="0.75"/></svg>
<span class="t" style="left:366.7px;top:332px;font-size:11px;transform:scaleX(0.9550);">interne Richtlinien (in Kraft)</span>
<div class="a" style="left:700px;top:332.2px;width:6px;height:9px;background:#99a1b7;"></div>
<span class="t" style="left:713.7px;top:332px;font-size:11px;transform:scaleX(0.9720);">fertig</span>
<div class="a" style="left:342px;top:353.2px;width:13px;height:1px;background:repeating-linear-gradient(90deg,#9a9a9a 0 1px,transparent 1px 2px)"></div>
<svg class="a" style="left:361px;top:345.4px" width="16" height="16" viewBox="0 0 16 16"><path d="M3.6 0.6H12L15.6 4.2V14.8H3.6Z" fill="#fff" stroke="#a3a3a3" stroke-width="0.8"/><path d="M12 0.6V4.2H15.6" fill="#e6e6e6" stroke="#a3a3a3" stroke-width="0.7"/><path d="M3.4 15.1H15.9" stroke="#5e5e5e" stroke-width="0.9"/><rect x="0" y="1.8" width="10" height="3.7" fill="#d8121a"/><path d="M5.8 13.6Q9 10.2 9.1 6.8Q9.9 10.2 13.6 11.4Q9.6 10.6 5.8 13.6Z" fill="none" stroke="#d6222a" stroke-width="0.9" stroke-linejoin="round"/></svg>
<span class="t" style="left:379.7px;top:348px;font-size:11px;transform:scaleX(0.9560);color:#fff;">Leitfaden für Dokumentationsprozess (System Lifecycle) .pdf</span>
<div class="a" style="left:700px;top:348.2px;width:6px;height:9px;background:#9aa0b0;"></div>
<span class="t" style="left:713.7px;top:348px;font-size:11px;transform:scaleX(0.9720);color:#fff;">gültig</span>
<div class="a" style="left:342px;top:369.2px;width:13px;height:1px;background:repeating-linear-gradient(90deg,#9a9a9a 0 1px,transparent 1px 2px)"></div>
<svg class="a" style="left:361px;top:361.4px" width="16" height="16" viewBox="0 0 16 16"><path d="M3.6 0.6H12L15.6 4.2V14.8H3.6Z" fill="#fff" stroke="#a3a3a3" stroke-width="0.8"/><path d="M12 0.6V4.2H15.6" fill="#e6e6e6" stroke="#a3a3a3" stroke-width="0.7"/><path d="M3.4 15.1H15.9" stroke="#5e5e5e" stroke-width="0.9"/><rect x="0" y="1.8" width="10" height="3.7" fill="#d8121a"/><path d="M5.8 13.6Q9 10.2 9.1 6.8Q9.9 10.2 13.6 11.4Q9.6 10.6 5.8 13.6Z" fill="none" stroke="#d6222a" stroke-width="0.9" stroke-linejoin="round"/></svg>
<div class="a" style="left:342px;top:385.2px;width:13px;height:1px;background:repeating-linear-gradient(90deg,#9a9a9a 0 1px,transparent 1px 2px)"></div>
<svg class="a" style="left:361px;top:377.4px" width="16" height="16" viewBox="0 0 16 16"><path d="M3.6 0.6H12L15.6 4.2V14.8H3.6Z" fill="#fff" stroke="#a3a3a3" stroke-width="0.8"/><path d="M12 0.6V4.2H15.6" fill="#e6e6e6" stroke="#a3a3a3" stroke-width="0.7"/><path d="M3.4 15.1H15.9" stroke="#5e5e5e" stroke-width="0.9"/><rect x="0" y="1.8" width="10" height="3.7" fill="#d8121a"/><path d="M5.8 13.6Q9 10.2 9.1 6.8Q9.9 10.2 13.6 11.4Q9.6 10.6 5.8 13.6Z" fill="none" stroke="#d6222a" stroke-width="0.9" stroke-linejoin="round"/></svg>
<div class="a" style="left:342px;top:401.2px;width:13px;height:1px;background:repeating-linear-gradient(90deg,#9a9a9a 0 1px,transparent 1px 2px)"></div>
<svg class="a" style="left:361px;top:393.4px" width="16" height="16" viewBox="0 0 16 16"><path d="M3.6 0.6H12L15.6 4.2V14.8H3.6Z" fill="#fff" stroke="#a3a3a3" stroke-width="0.8"/><path d="M12 0.6V4.2H15.6" fill="#e6e6e6" stroke="#a3a3a3" stroke-width="0.7"/><path d="M3.4 15.1H15.9" stroke="#5e5e5e" stroke-width="0.9"/><rect x="0" y="1.8" width="10" height="3.7" fill="#d8121a"/><path d="M5.8 13.6Q9 10.2 9.1 6.8Q9.9 10.2 13.6 11.4Q9.6 10.6 5.8 13.6Z" fill="none" stroke="#d6222a" stroke-width="0.9" stroke-linejoin="round"/></svg>
<div class="a" style="left:329px;top:417.2px;width:8px;height:1px;background:repeating-linear-gradient(90deg,#9a9a9a 0 1px,transparent 1px 2px)"></div>
<svg class="a" style="left:337px;top:413.2px" width="9" height="9" viewBox="0 0 9 9"><rect x="0.5" y="0.5" width="8" height="8" fill="#fff" stroke="#919191" stroke-width="1"/><path d="M2.5 4.5H6.5M4.5 2.5V6.5" stroke="#000" stroke-width="1"/></svg>
<svg class="a" style="left:348.5px;top:410.7px" width="16" height="13" viewBox="0 0 16 13"><path d="M0.9 11.6V2.6Q0.9 1 2.4 0.8H5.8Q7.2 0.9 7.6 2.4H13.4Q14.7 2.5 14.7 3.9V11.6Z" fill="url(#fg)" stroke="#9c9a7e" stroke-width="0.9"/><path d="M1.2 12.3H15.3V4.2" fill="none" stroke="#6f6d62" stroke-width="0.9" opacity="0.75"/></svg>
<span class="t" style="left:366.7px;top:412px;font-size:11px;transform:scaleX(0.9720);">in</span>
<div class="a" style="left:316px;top:433.2px;width:8px;height:1px;background:repeating-linear-gradient(90deg,#9a9a9a 0 1px,transparent 1px 2px)"></div>
<svg class="a" style="left:324px;top:429.2px" width="9" height="9" viewBox="0 0 9 9"><rect x="0.5" y="0.5" width="8" height="8" fill="#fff" stroke="#919191" stroke-width="1"/><path d="M2.5 4.5H6.5M4.5 2.5V6.5" stroke="#000" stroke-width="1"/></svg>
<svg class="a" style="left:335.5px;top:426.7px" width="16" height="13" viewBox="0 0 16 13"><path d="M0.9 11.6V2.6Q0.9 1 2.4 0.8H5.8Q7.2 0.9 7.6 2.4H13.4Q14.7 2.5 14.7 3.9V11.6Z" fill="url(#fg)" stroke="#9c9a7e" stroke-width="0.9"/><path d="M1.2 12.3H15.3V4.2" fill="none" stroke="#6f6d62" stroke-width="0.9" opacity="0.75"/></svg>
<span class="t" style="left:353.7px;top:428px;font-size:11px;transform:scaleX(0.9720);">Nor</span>
<div class="a" style="left:303px;top:449.2px;width:8px;height:1px;background:repeating-linear-gradient(90deg,#9a9a9a 0 1px,transparent 1px 2px)"></div>
<svg class="a" style="left:311px;top:445.2px" width="9" height="9" viewBox="0 0 9 9"><rect x="0.5" y="0.5" width="8" height="8" fill="#fff" stroke="#919191" stroke-width="1"/><path d="M2.5 4.5H6.5M4.5 2.5V6.5" stroke="#000" stroke-width="1"/></svg>
<svg class="a" style="left:322.5px;top:442.7px" width="16" height="13" viewBox="0 0 16 13"><path d="M0.9 11.6V2.6Q0.9 1 2.4 0.8H5.8Q7.2 0.9 7.6 2.4H13.4Q14.7 2.5 14.7 3.9V11.6Z" fill="url(#fg)" stroke="#9c9a7e" stroke-width="0.9"/><path d="M1.2 12.3H15.3V4.2" fill="none" stroke="#6f6d62" stroke-width="0.9" opacity="0.75"/></svg>
<span class="t" style="left:340.7px;top:444px;font-size:11px;transform:scaleX(0.9720);">Corpor</span>
<div class="a" style="left:290px;top:465.2px;width:8px;height:1px;background:repeating-linear-gradient(90deg,#9a9a9a 0 1px,transparent 1px 2px)"></div>
<svg class="a" style="left:298px;top:461.2px" width="9" height="9" viewBox="0 0 9 9"><rect x="0.5" y="0.5" width="8" height="8" fill="#fff" stroke="#919191" stroke-width="1"/><path d="M2.5 4.5H6.5M4.5 2.5V6.5" stroke="#000" stroke-width="1"/></svg>
<svg class="a" style="left:309.5px;top:458.7px" width="16" height="13" viewBox="0 0 16 13"><path d="M0.9 11.6V2.6Q0.9 1 2.4 0.8H5.8Q7.2 0.9 7.6 2.4H13.4Q14.7 2.5 14.7 3.9V11.6Z" fill="url(#fg)" stroke="#9c9a7e" stroke-width="0.9"/><path d="M1.2 12.3H15.3V4.2" fill="none" stroke="#6f6d62" stroke-width="0.9" opacity="0.75"/></svg>
<span class="t" style="left:327.7px;top:460px;font-size:11px;transform:scaleX(0.9720);">Beratung</span>
<div class="a" style="left:377px;top:345.2px;width:290px;height:16px;border:1px dotted #e0a060"></div>
<div class="a" style="left:812px;top:345.2px;width:1px;height:16px;background:#fff;"></div>
<div class="a" style="left:694px;top:345.2px;width:1px;height:16px;background:#fff;"></div>
<div class="a" style="left:283px;top:474px;width:593px;height:17px;background:#f0f0f0;"></div>
<svg class="a" style="left:290px;top:478.5px" width="5" height="8" viewBox="0 0 5 8"><path d="M4.6 0.4V7.6L0.4 4Z" fill="#404040"/></svg>
<div class="a" style="left:301px;top:475px;width:300px;height:14px;border:1px solid #979797;border-radius:2px;background:linear-gradient(#f4f4f4,#e8e8e8 45%,#d4d4d4 50%,#dcdcdc);box-shadow:inset 0 0 0 1px rgba(255,255,255,.7)"></div>
<div class="a" style="left:281px;top:492px;width:613px;height:5px;background:#f0f0f0;"></div>
<div class="a" style="left:281px;top:496px;width:613px;height:13px;background:#fff;border-top:2px solid #747474;border-left:2px solid #747474;"></div>
<div class="a" style="left:281px;top:509px;width:613px;height:3px;background:#f0f0f0;"></div>
<div class="a" style="left:281px;top:512px;width:613px;height:15px;background:#f0f0f0;border-top:1px solid #8a8a8a;border-left:1px solid #8a8a8a;border-right:1px solid #fff;border-bottom:1px solid #fff"></div>
<span class="t" style="left:284.7px;top:515px;font-size:11px;transform:scaleX(0.9350);">4 Element(e) in der</span>
<div class="a" style="left:372px;top:359px;width:599px;height:288px;background:#b9d1ea;border:1px solid #0a0a0a;border-radius:4px 4px 0 0;box-shadow:2px 5px 7px rgba(0,0,0,0.55),0 0 6px rgba(0,0,0,0.25),inset 1px 1px 0 rgba(255,255,255,.92),inset -1px -1px 0 #3fdcf7;"></div>
<div class="a" style="left:374px;top:361px;width:595px;height:29px;background:linear-gradient(90deg,rgba(255,255,255,0),rgba(255,255,255,0) 60%,rgba(255,255,255,.12)),linear-gradient(#98b3d4,#a9c1de 50%,#b6cde7);border-radius:3px 3px 0 0;"></div>
<svg class="a" style="left:382px;top:369px" width="17" height="17" viewBox="0 0 17 17"><path d="M0.5 0.5H7.5V12.5H0.5Z" fill="#fff" stroke="#8a8a8a" stroke-width="0.9"/><path d="M3.5 2.5H10.5V14.5H3.5Z" fill="#fff" stroke="#8a8a8a" stroke-width="0.9"/><path d="M6.5 4.5H12.5L15.5 7.5V16.5H6.5Z" fill="#fdfbdc" stroke="#6f6f6f" stroke-width="0.9"/></svg>
<span class="t" style="left:401.7px;top:373px;font-size:11.5px;transform:scaleX(1.0307);">Historie zu Produkt 'Leitfaden für Dokumentationsprozess (System Lifecycle) .pdf'</span>
<div class="a" style="left:864px;top:369px;width:30px;height:16px;border:1px solid #5f7594;border-radius:3px;background:linear-gradient(#dbe7f4,#bcd0e6 48%,#9fbbd9 52%,#bdd3ea);box-shadow:inset 0 0 0 1px rgba(255,255,255,.55)"></div>
<div class="a" style="left:897px;top:369px;width:30px;height:16px;border:1px solid #5f7594;border-radius:3px;background:linear-gradient(#dbe7f4,#bcd0e6 48%,#9fbbd9 52%,#bdd3ea);box-shadow:inset 0 0 0 1px rgba(255,255,255,.55)"></div>
<div class="a" style="left:930px;top:369px;width:31px;height:16px;border:1px solid #6b2a20;border-radius:3px;background:linear-gradient(#e7a595,#d46a55 48%,#c23f22 52%,#d8623c 85%,#e29a70);box-shadow:inset 0 0 0 1px rgba(255,255,255,.35)"></div>
<svg class="a" style="left:873px;top:377px" width="12" height="5" viewBox="0 0 12 5"><rect x="0.5" y="0.5" width="10.6" height="3.6" rx="1" fill="#fff" stroke="#4d5a70" stroke-width="1"/></svg>
<svg class="a" style="left:906px;top:373px" width="12" height="9" viewBox="0 0 12 9"><rect x="0.6" y="0.6" width="10" height="7.6" rx="1" fill="#fdfdfd" stroke="#4d5a70" stroke-width="1.1"/><rect x="3.3" y="3.1" width="4.6" height="2.6" fill="#e8eef6" stroke="#4d5a70" stroke-width="1"/></svg>
<svg class="a" style="left:939px;top:372.5px" width="13" height="10" viewBox="0 0 13 10"><path d="M1.2 1H4.4L6.5 3.6L8.6 1H11.8L8.2 5L11.8 9H8.6L6.5 6.4L4.4 9H1.2L4.8 5Z" fill="#fff" stroke="#54302a" stroke-width="0.9" stroke-linejoin="round"/></svg>
<div class="a" style="left:380px;top:389px;width:582px;height:1px;background:#a0a0a0;"></div>
<div class="a" style="left:380px;top:390px;width:582px;height:1px;background:#fff;"></div>
<div class="a" style="left:380px;top:391px;width:582px;height:22px;background:#f0f0f0;"></div>
<div class="a" style="left:380px;top:413px;width:582px;height:1px;background:#a8a8a8;"></div>
<div class="a" style="left:380px;top:414px;width:582px;height:1.5px;background:#fcfcfc;"></div>
<div class="a" style="left:380px;top:389px;width:1px;height:24px;background:#a0a0a0;"></div>
<div class="a" style="left:381px;top:390px;width:1px;height:23px;background:#fff;"></div>
<div class="a" style="left:961px;top:389px;width:1px;height:25px;background:#a8a8a8;"></div>
<svg class="a" style="left:385px;top:397.3px" width="16" height="10" viewBox="0 0 16 10"><path d="M0.4 0.9L2.2 1.2L2.9 6.6" fill="none" stroke="#38414d" stroke-width="1.1"/><rect x="2.9" y="5.2" width="4.8" height="3.7" rx="1.3" fill="none" stroke="#38414d" stroke-width="1.1"/><rect x="9.3" y="5.2" width="5.4" height="3.7" rx="1.3" fill="none" stroke="#38414d" stroke-width="1.1"/><path d="M7.7 6.4H9.3M8 0.8Q9.6 0.2 11 1.2L15.3 6" fill="none" stroke="#38414d" stroke-width="1.1"/><path d="M3.5 9.7H15.5" stroke="#bdbdbd" stroke-width="0.9"/></svg>
<span class="t" style="left:403.2px;top:397px;font-size:11px;transform:scaleX(0.9671);">Ansehen</span>
<svg class="a" style="left:452.5px;top:397px" width="16" height="11" viewBox="0 0 16 11"><rect x="0.5" y="1.5" width="9.6" height="7.2" fill="#f3f3f3" stroke="#b4b4b4" stroke-width="0.9"/><path d="M1.4 9.6H11V3.4" fill="none" stroke="#8f8f8f" stroke-width="1"/><path d="M2.8 7.6L8.2 1.6L13.6 0.6L14.2 3.6L9.4 5.6L5.8 9.2Z" fill="#f3dfb2" stroke="#57503f" stroke-width="0.7" stroke-linejoin="round"/><path d="M4.4 7.8L8.8 3M6 8.4L10.2 3.8M7.4 8L11.6 3.4" stroke="#6a6048" stroke-width="0.5"/><rect x="13.9" y="0" width="2" height="5" fill="#1463c2"/></svg>
<span class="t" style="left:470.4px;top:397px;font-size:11px;transform:scaleX(0.9634);">Eigenschaften...</span>
<div class="a" style="left:553px;top:391px;width:1px;height:22px;background:#a0a0a0;"></div>
<div class="a" style="left:554px;top:391px;width:1px;height:22px;background:#fff;"></div>
<svg class="a" style="left:560px;top:392.5px" width="16" height="17" viewBox="0 0 16 17"><path d="M6.5 1.5H12.5L15.5 4.5V13.5H6.5Z" fill="#f2f2f2" stroke="#7d7d7d" stroke-width="0.9"/><path d="M4.5 3.5H10.5L13.5 6.5V15.5H4.5Z" fill="#fff" stroke="#7d7d7d" stroke-width="0.9"/><path d="M10.5 3.5V6.5H13.5" fill="#dedede" stroke="#7d7d7d" stroke-width="0.8"/><path d="M9.6 6.4Q3.6 6.4 3.6 11.2V12H1L4.8 16.4L8.6 12H6.2V11.2Q6.4 8.8 9.6 8.6Z" fill="#2a7be0" stroke="#114fa8" stroke-width="0.7"/></svg>
<span class="t" style="left:577.8px;top:397px;font-size:11px;transform:scaleX(0.9548);">Version holen...</span>
<div class="a" style="left:657px;top:391px;width:1px;height:22px;background:#a0a0a0;"></div>
<div class="a" style="left:658px;top:391px;width:1px;height:22px;background:#fff;"></div>
<svg class="a" style="left:665px;top:395px" width="14" height="14" viewBox="0 0 14 14"><path d="M1 1.5Q7 6 12.6 12.6M12.4 0.8Q7 6 1.6 13" fill="none" stroke="#a5a5a5" stroke-width="2.2" stroke-linecap="round"/></svg>
<div class="a" style="left:686px;top:391px;width:1px;height:22px;background:#a0a0a0;"></div>
<div class="a" style="left:687px;top:391px;width:1px;height:22px;background:#fff;"></div>
<span class="t" style="left:695.4px;top:397px;font-size:11px;transform:scaleX(0.9643);">Unterschiede anzeigen</span>
<div class="a" style="left:811px;top:391px;width:1px;height:22px;background:#a0a0a0;"></div>
<div class="a" style="left:812px;top:391px;width:1px;height:22px;background:#fff;"></div>
<svg class="a" style="left:821px;top:395px" width="12" height="14" viewBox="0 0 12 14"><path d="M0.5 0.5H8L11.5 4V13.5H0.5Z" fill="#fbfbfb" stroke="#8a8a8a" stroke-width="0.9"/><path d="M3.2 8.4A2.8 2.8 0 1 1 6 11.2" fill="none" stroke="#2a56c0" stroke-width="1.3"/><path d="M4.6 9.4L6.4 11.2L4.6 13" fill="none" stroke="#2a56c0" stroke-width="1"/></svg>
<svg class="a" style="left:841px;top:393.5px" width="17" height="16" viewBox="0 0 17 16"><path d="M5 6L8 1.2L14.6 3.8L12 8Z" fill="#fdf8c8" stroke="#b9b38a" stroke-width="0.6"/><path d="M1 8.4L5 5.6L15.6 8.4V12L11.6 15L1 12Z" fill="#cfcfcf" stroke="#7f7f7f" stroke-width="0.8"/><path d="M1 8.4L11.6 11.2L15.6 8.4M11.6 11.2V15" fill="none" stroke="#7f7f7f" stroke-width="0.8"/></svg>
<div class="a" style="left:380px;top:415.4px;width:582px;height:179px;background:#fff;border-top:2px solid #747474;border-left:2px solid #747474;"></div>
<div class="a" style="left:380px;top:415.4px;width:582px;height:1px;background:#9a9a9a;"></div>
<div class="a" style="left:380px;top:415.4px;width:1px;height:179px;background:#9a9a9a;"></div>
<div class="a" style="left:382px;top:417.4px;width:580px;height:15px;background:#f0f0f0;"></div>
<div class="a" style="left:382px;top:431.4px;width:580px;height:1px;background:#b0b0b0;"></div>
<span class="t" style="left:383.7px;top:420px;font-size:11px;transform:scaleX(0.9720);">Zustand</span>
<div class="a" style="left:460px;top:417.4px;width:1px;height:15px;background:#9a9a9a;"></div>
<div class="a" style="left:461px;top:417.4px;width:1px;height:15px;background:#fff;"></div>
<div class="a" style="left:460px;top:432.4px;width:1px;height:160.6px;background:#ececec;"></div>
<span class="t" style="left:463.7px;top:420px;font-size:11px;transform:scaleX(0.9720);">Version</span>
<div class="a" style="left:520px;top:417.4px;width:1px;height:15px;background:#9a9a9a;"></div>
<div class="a" style="left:521px;top:417.4px;width:1px;height:15px;background:#fff;"></div>
<div class="a" style="left:520px;top:432.4px;width:1px;height:160.6px;background:#ececec;"></div>
<span class="t" style="left:523.7px;top:420px;font-size:11px;transform:scaleX(0.9720);">Aktion</span>
<div class="a" style="left:658px;top:417.4px;width:1px;height:15px;background:#9a9a9a;"></div>
<div class="a" style="left:659px;top:417.4px;width:1px;height:15px;background:#fff;"></div>
<div class="a" style="left:658px;top:432.4px;width:1px;height:160.6px;background:#ececec;"></div>
<span class="t" style="left:661.7px;top:420px;font-size:11px;transform:scaleX(0.9720);">Mitarbeiter</span>
<div class="a" style="left:755px;top:417.4px;width:1px;height:15px;background:#9a9a9a;"></div>
<div class="a" style="left:756px;top:417.4px;width:1px;height:15px;background:#fff;"></div>
<div class="a" style="left:755px;top:432.4px;width:1px;height:160.6px;background:#ececec;"></div>
<span class="t" style="left:758.2px;top:420px;font-size:11px;transform:scaleX(0.9720);">Baseline</span>
<div class="a" style="left:856px;top:417.4px;width:1px;height:15px;background:#9a9a9a;"></div>
<div class="a" style="left:857px;top:417.4px;width:1px;height:15px;background:#fff;"></div>
<div class="a" style="left:856px;top:432.4px;width:1px;height:160.6px;background:#ececec;"></div>
<span class="t" style="left:859.7px;top:420px;font-size:11px;transform:scaleX(0.9720);">Erstellt am</span>
<div class="a" style="left:382px;top:432.4px;width:580px;height:16px;background:#3399ff;"></div>
<div class="a" style="left:460px;top:432.4px;width:1px;height:16px;background:#fff;"></div>
<div class="a" style="left:520px;top:432.4px;width:1px;height:16px;background:#fff;"></div>
<div class="a" style="left:658px;top:432.4px;width:1px;height:16px;background:#fff;"></div>
<div class="a" style="left:755px;top:432.4px;width:1px;height:16px;background:#fff;"></div>
<div class="a" style="left:856px;top:432.4px;width:1px;height:16px;background:#fff;"></div>
<div class="a" style="left:400px;top:436.4px;width:6px;height:9px;background:#9aa0b0;"></div>
<span class="t" style="left:413.7px;top:436px;font-size:11px;transform:scaleX(0.9720);color:#fff;">gültig</span>
<span class="t" style="left:463.7px;top:436px;font-size:11px;transform:scaleX(0.9720);color:#fff;">0.8</span>
<span class="t" style="left:523.7px;top:436px;font-size:11px;transform:scaleX(0.9720);color:#fff;">Eigenschaften geändert</span>
<span class="t" style="left:661.7px;top:436px;font-size:11px;transform:scaleX(0.9720);color:#fff;">Heike Riemer</span>
<span class="t" style="left:859.7px;top:436px;font-size:11px;transform:scaleX(0.9850);color:#fff;">18.05.2015 13:15:30</span>
<div class="a" style="left:400px;top:452.4px;width:6px;height:9px;background:#99a1b7;"></div>
<span class="t" style="left:413.7px;top:452px;font-size:11px;transform:scaleX(0.9720);">gültig</span>
<span class="t" style="left:463.7px;top:452px;font-size:11px;transform:scaleX(0.9720);">0.7</span>
<span class="t" style="left:523.7px;top:452px;font-size:11px;transform:scaleX(0.9720);">Eigenschaften geändert</span>
<span class="t" style="left:661.7px;top:452px;font-size:11px;transform:scaleX(0.9720);">Heike Riemer</span>
<span class="t" style="left:859.7px;top:452px;font-size:11px;transform:scaleX(0.9850);">26.05.2014 11:26:15</span>
<div class="a" style="left:400px;top:468.4px;width:6px;height:9px;background:#99a1b7;"></div>
<span class="t" style="left:413.7px;top:468px;font-size:11px;transform:scaleX(0.9720);">gültig</span>
<span class="t" style="left:463.7px;top:468px;font-size:11px;transform:scaleX(0.9720);">0.6</span>
<span class="t" style="left:523.7px;top:468px;font-size:11px;transform:scaleX(0.9720);">Eigenschaften geändert</span>
<span class="t" style="left:661.7px;top:468px;font-size:11px;transform:scaleX(0.9720);">Heike Riemer</span>
<span class="t" style="left:859.7px;top:468px;font-size:11px;transform:scaleX(0.9850);">26.05.2014 11:18:10</span>
<div class="a" style="left:400px;top:484.4px;width:6px;height:9px;background:#99a1b7;"></div>
<span class="t" style="left:413.7px;top:484px;font-size:11px;transform:scaleX(0.9720);">gültig</span>
<span class="t" style="left:463.7px;top:484px;font-size:11px;transform:scaleX(0.9720);">0.5</span>
<span class="t" style="left:523.7px;top:484px;font-size:11px;transform:scaleX(0.9720);">Umbenannt</span>
<span class="t" style="left:661.7px;top:484px;font-size:11px;transform:scaleX(0.9720);">Administrator</span>
<span class="t" style="left:859.7px;top:484px;font-size:11px;transform:scaleX(0.9850);">12.05.2013 00:04:15</span>
<div class="a" style="left:400px;top:500.4px;width:6px;height:9px;background:#99a1b7;"></div>
<span class="t" style="left:413.7px;top:500px;font-size:11px;transform:scaleX(0.9720);">gültig</span>
<span class="t" style="left:463.7px;top:500px;font-size:11px;transform:scaleX(0.9720);">0.4</span>
<span class="t" style="left:523.7px;top:500px;font-size:11px;transform:scaleX(0.9720);">Eigenschaften geändert</span>
<span class="t" style="left:661.7px;top:500px;font-size:11px;transform:scaleX(0.9720);">Bastian Rosner</span>
<span class="t" style="left:859.7px;top:500px;font-size:11px;transform:scaleX(0.9850);">06.05.2013 16:27:41</span>
<div class="a" style="left:400px;top:516.4px;width:6px;height:9px;background:#99a1b7;"></div>
<span class="t" style="left:413.7px;top:516px;font-size:11px;transform:scaleX(0.9720);">gültig</span>
<span class="t" style="left:463.7px;top:516px;font-size:11px;transform:scaleX(0.9720);">0.3</span>
<span class="t" style="left:523.7px;top:516px;font-size:11px;transform:scaleX(0.9720);">Eigenschaften geändert</span>
<span class="t" style="left:661.7px;top:516px;font-size:11px;transform:scaleX(0.9720);">Bastian Rosner</span>
<span class="t" style="left:859.7px;top:516px;font-size:11px;transform:scaleX(0.9850);">06.05.2013 16:25:59</span>
<div class="a" style="left:400px;top:532.4px;width:6px;height:9px;background:#99a1b7;"></div>
<span class="t" style="left:413.7px;top:532px;font-size:11px;transform:scaleX(0.9720);">gültig</span>
<span class="t" style="left:463.7px;top:532px;font-size:11px;transform:scaleX(0.9720);">0.2</span>
<span class="t" style="left:523.7px;top:532px;font-size:11px;transform:scaleX(0.9720);">Baseline gezogen</span>
<span class="t" style="left:661.7px;top:532px;font-size:11px;transform:scaleX(0.9720);">Bastian Rosner</span>
<span class="t" style="left:859.7px;top:532px;font-size:11px;transform:scaleX(0.9850);">28.08.2012 16:11:33</span>
<div class="a" style="left:400px;top:548.4px;width:6px;height:9px;background:#99a1b7;"></div>
<span class="t" style="left:413.7px;top:548px;font-size:11px;transform:scaleX(0.9720);">gültig</span>
<span class="t" style="left:463.7px;top:548px;font-size:11px;transform:scaleX(0.9720);">0.2</span>
<span class="t" style="left:661.7px;top:548px;font-size:11px;transform:scaleX(0.9720);">Bastian Rosner</span>
<span class="t" style="left:758.2px;top:548px;font-size:11px;transform:scaleX(0.9720);">Autom. Baseline</span>
<span class="t" style="left:859.7px;top:548px;font-size:11px;transform:scaleX(0.9850);">27.08.2012 17:43:12</span>
<div class="a" style="left:400px;top:564.4px;width:6px;height:9px;background:#99a1b7;"></div>
<span class="t" style="left:413.7px;top:564px;font-size:11px;transform:scaleX(0.9720);">fertig</span>
<span class="t" style="left:463.7px;top:564px;font-size:11px;transform:scaleX(0.9720);">0.2</span>
<span class="t" style="left:523.7px;top:564px;font-size:11px;transform:scaleX(0.9720);">Kategorie geändert</span>
<span class="t" style="left:661.7px;top:564px;font-size:11px;transform:scaleX(0.9720);">Bastian Rosner</span>
<span class="t" style="left:859.7px;top:564px;font-size:11px;transform:scaleX(0.9850);">26.08.2012 10:58:32</span>
<div class="a" style="left:400px;top:580.4px;width:6px;height:9px;background:#99a1b7;"></div>
<span class="t" style="left:413.7px;top:580px;font-size:11px;transform:scaleX(0.9720);">fertig</span>
<span class="t" style="left:463.7px;top:580px;font-size:11px;transform:scaleX(0.9720);">0.1</span>
<span class="t" style="left:523.7px;top:580px;font-size:11px;transform:scaleX(0.9720);">Erstellt</span>
<span class="t" style="left:661.7px;top:580px;font-size:11px;transform:scaleX(0.9720);">Administrator</span>
<span class="t" style="left:859.7px;top:580px;font-size:11px;transform:scaleX(0.9850);">07.05.2012 00:23:38</span>
<div class="a" style="left:382px;top:593px;width:580px;height:1px;background:#6f6f6f;"></div>
<div class="a" style="left:382px;top:594px;width:580px;height:21px;background:#f0f0f0;"></div>
<div class="a" style="left:382px;top:598px;width:580px;height:17px;background:#f0f0f0;"></div>
<svg class="a" style="left:389px;top:602.5px" width="5" height="8" viewBox="0 0 5 8"><path d="M4.6 0.4V7.6L0.4 4Z" fill="#404040"/></svg>
<div class="a" style="left:400px;top:599px;width:284px;height:14px;border:1px solid #979797;border-radius:2px;background:linear-gradient(#f4f4f4,#e8e8e8 45%,#d4d4d4 50%,#dcdcdc);box-shadow:inset 0 0 0 1px rgba(255,255,255,.7)"></div>
<svg class="a" style="left:538px;top:603px" width="8" height="7" viewBox="0 0 8 7"><path d="M0.5 0V7M3.5 0V7M6.5 0V7" stroke="#5e5e5e" stroke-width="1"/></svg>
<svg class="a" style="left:951px;top:602.5px" width="5" height="8" viewBox="0 0 5 8"><path d="M0.4 0.4V7.6L4.6 4Z" fill="#404040"/></svg>
<div class="a" style="left:380px;top:615px;width:582px;height:6px;background:#f4f4f4;"></div>
<div class="a" style="left:380px;top:620px;width:582px;height:18px;background:#fff;border-top:2px solid #747474;border-left:2px solid #747474;border-right:1px solid #e0e0e0;border-bottom:1px solid #e8e8e8"></div>
</body></html>
